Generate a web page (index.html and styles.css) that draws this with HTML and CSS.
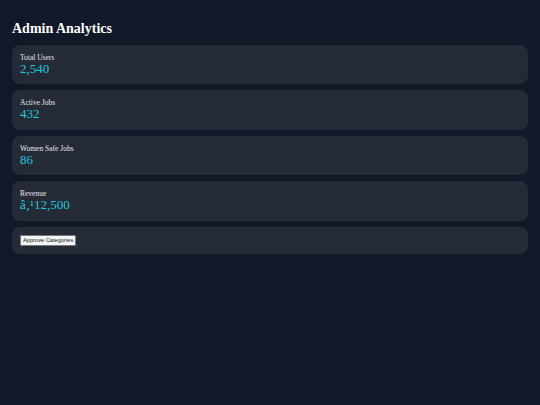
FILE: index.html
```html
<!DOCTYPE html>
<html lang="en">

<head>
    <meta charset="UTF-8">
    <meta name="viewport" content="width=device-width, initial-scale=1.0">
    <title>Admin Analytics</title>

    <link rel="stylesheet" href="styles.css">
</head>

<body>
    <main>
        <h1>Admin Analytics</h1>
        <section class="stat">
            <p class="label">Total Users</p>
            <p class="value">2,540</p>
        </section>
        <section class="stat">
            <p class="label">Active Jobs</p>
            <p class="value">432</p>
        </section>
        <section class="stat">
            <p class="label">Women Safe Jobs</p>
            <p class="value">86</p>
        </section>
        <section class="stat">
            <p class="label">Revenue</p>
            <p class="value">â‚¹12,500</p>
        </section>
        <section class="stat">
            <button>Approve Categories</button>
        </section>
    </main>
</body>

</html>
```
FILE: styles.css
```css
* {
    padding: 0;
    margin: 0;
    box-sizing: border-box;
}

body {
    min-height: 100vh;
    background-color: #111827;
    color: white;
    font-family: "Liberation Serif", "Times New Roman", serif;
}

main {
    padding: 20px 12px;
    display: flex;
    flex-direction: column;
    gap: 6px;
}

h1 {
    font-size: 14px;
    font-weight: bold;
    line-height: 17px;
    margin-bottom: 2px;
}

.stat {
    background-color: #252a37;
    border-radius: 8px;
    padding: 8px;
}

.stat .label {
    font-size: 7.5px;
    line-height: 9px;
    color: #e5e7eb;
}

.stat .value {
    font-size: 13px;
    line-height: 14.4px;
    color: #22c8dd;
}

.stat button {
    font-family: "Liberation Sans", Arial, sans-serif;
    font-size: 5.7px;
    padding: 1.5px 2px;
    background-color: #f3f4f6;
    color: #111;
    border: 1px solid #777;
    border-radius: 1px;
    display: block;
}
```
